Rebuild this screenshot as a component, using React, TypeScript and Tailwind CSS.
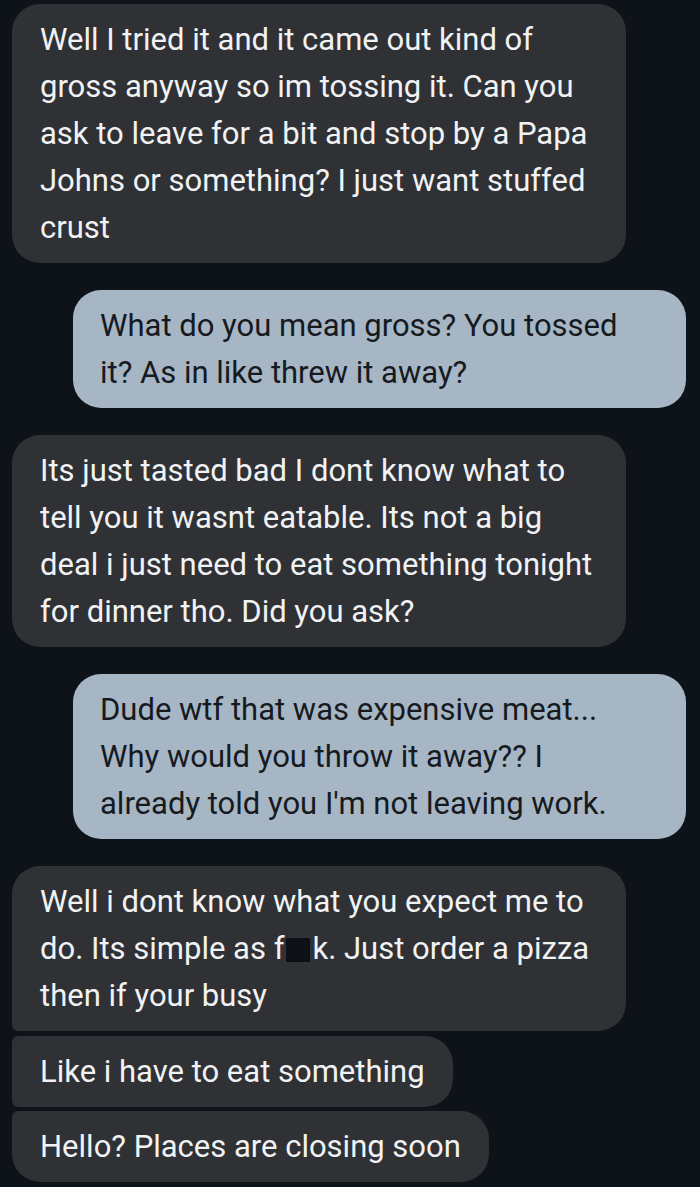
import React from "react";

type Msg = {
  text: React.ReactNode;
  mine?: boolean;
  shape: string;
  gap: string;
};

const messages: Msg[] = [
  {
    text: "Well I tried it and it came out kind of gross anyway so im tossing it. Can you ask to leave for a bit and stop by a Papa Johns or something? I just want stuffed crust",
    shape: "rounded-[28px]",
    gap: "mt-[4px]",
  },
  {
    text: "What do you mean gross? You tossed it? As in like threw it away?",
    mine: true,
    shape: "rounded-[28px]",
    gap: "mt-[27px]",
  },
  {
    text: "Its just tasted bad I dont know what to tell you it wasnt eatable. Its not a big deal i just need to eat something tonight for dinner tho. Did you ask?",
    shape: "rounded-[28px]",
    gap: "mt-[27px]",
  },
  {
    text: "Dude wtf that was expensive meat... Why would you throw it away?? I already told you I'm not leaving work.",
    mine: true,
    shape: "rounded-[28px]",
    gap: "mt-[27px]",
  },
  {
    text: (
      <>
        Well i dont know what you expect me to do. Its simple as f
        <span className="inline-block w-[24px] h-[24px] ml-[2px] mr-[2px] bg-[#0d1117] align-[-3px]"></span>k. Just order a pizza then if your busy
      </>
    ),
    shape: "rounded-t-[28px] rounded-br-[28px] rounded-bl-[6px]",
    gap: "mt-[27px]",
  },
  {
    text: "Like i have to eat something",
    shape: "rounded-r-[28px] rounded-l-[6px]",
    gap: "mt-[5px]",
  },
  {
    text: "Hello? Places are closing soon",
    shape: "rounded-r-[28px] rounded-tl-[6px] rounded-bl-[28px]",
    gap: "mt-[4px]",
  },
];

export default function App() {
  return (
    <div
      className="w-[700px] h-[1187px] overflow-hidden bg-[#0e1319] flex flex-col pl-[12px] pr-[14px]"
      style={{ fontFamily: "Roboto, 'Noto Sans', sans-serif" }}
    >
      {messages.map((m, i) => (
        <div key={i} className={`flex ${m.mine ? "justify-end" : "justify-start"} ${m.gap}`}>
          <div
            className={`py-[12px] text-[31px] leading-[47px] ${m.shape} ${
              m.mine
                ? "max-w-[613px] pl-[27px] pr-[50px] bg-[#a6b6c4] text-[#161a1f]"
                : "max-w-[614px] px-[28px] bg-[#2f3135] text-[#f1f2f4]"
            }`}
          >
            {m.text}
          </div>
        </div>
      ))}
    </div>
  );
}
